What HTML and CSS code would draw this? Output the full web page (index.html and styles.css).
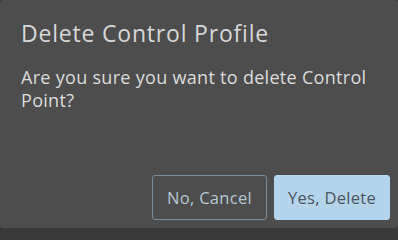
FILE: index.html
```html
<!DOCTYPE html>
<html>
<head>
<meta charset="utf-8">
<link rel="stylesheet" href="styles.css">
</head>
<body>
<div class="dialog">
  <h1 class="title">Delete Control Profile</h1>
  <p class="message">Are you sure you want to delete Control Point?</p>
  <div class="actions">
    <button class="btn btn-outline">No, Cancel</button>
    <button class="btn btn-primary">Yes, Delete</button>
  </div>
</div>
</body>
</html>
```

FILE: styles.css
```css
html, body {
  margin: 0;
  padding: 0;
  background: #3a3a3a;
}
.dialog {
  box-sizing: border-box;
  width: 398px;
  height: 228px;
  background: #4d4d4d;
  border-radius: 3px;
  padding: 18px 8px 8px 21px;
  display: flex;
  flex-direction: column;
  font-family: "Open Sans", "Liberation Sans", sans-serif;
}
.title {
  margin: 0;
  font-weight: 400;
  font-size: 23px;
  letter-spacing: 0.8px;
  line-height: 30px;
  color: #d8d8d8;
}
.message {
  margin: 18px 0 0 0;
  font-size: 18px;
  letter-spacing: 0.3px;
  line-height: 23px;
  color: #dcdcdc;
  padding-right: 8px;
}
.actions {
  margin-top: auto;
  display: flex;
  justify-content: flex-end;
  gap: 7px;
}
.btn {
  box-sizing: border-box;
  height: 45px;
  width: 116px;
  border-radius: 3px;
  font-family: inherit;
  font-size: 16.5px;
  letter-spacing: 0.3px;
  padding: 0;
  cursor: pointer;
}
.btn-outline {
  width: 115px;
  background: transparent;
  border: 1px solid #7c8d99;
  color: #b6c8d6;
}
.btn-primary {
  background: #b4d4eb;
  border: 1px solid #b4d4eb;
  color: #4a5561;
}
```
